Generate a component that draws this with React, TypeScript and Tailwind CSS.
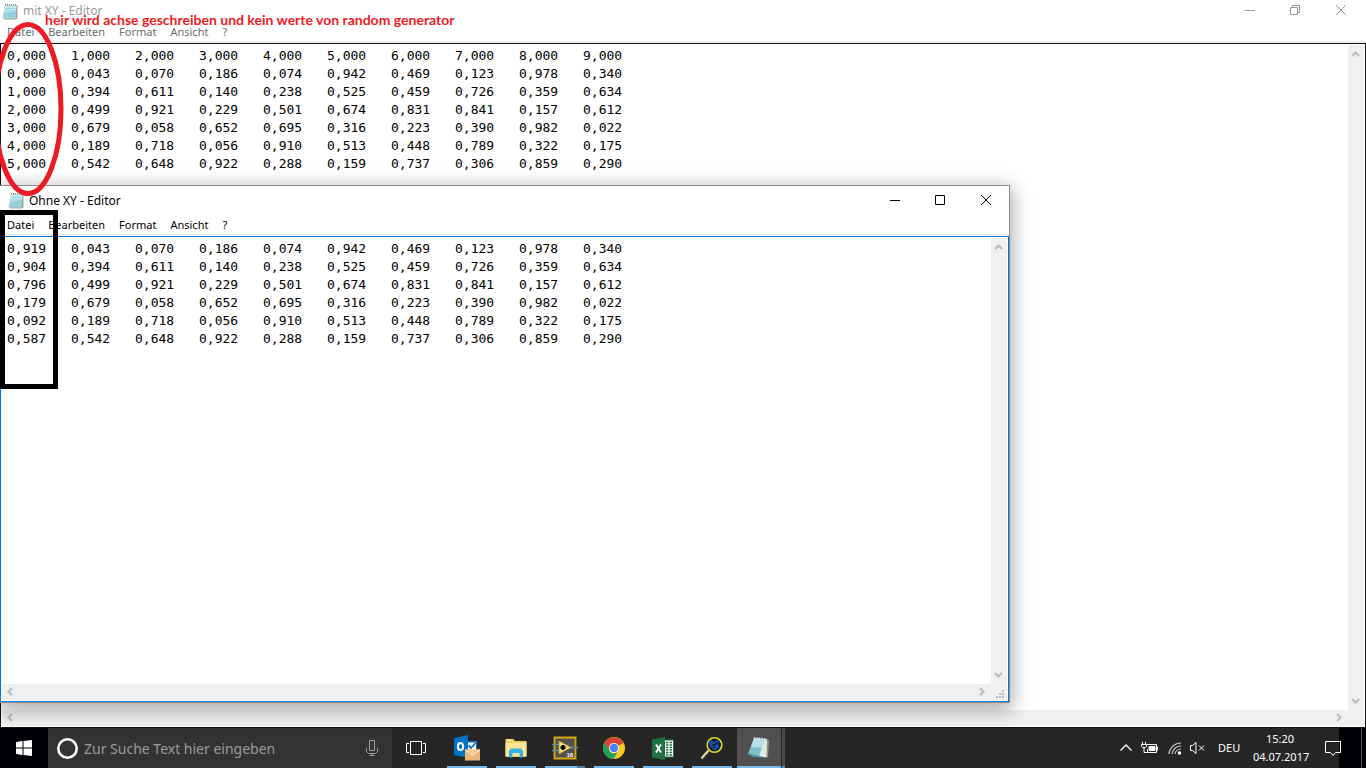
import { type FC, type ReactNode } from 'react';

const withAxis = [
  "0,000\t1,000\t2,000\t3,000\t4,000\t5,000\t6,000\t7,000\t8,000\t9,000",
  "0,000\t0,043\t0,070\t0,186\t0,074\t0,942\t0,469\t0,123\t0,978\t0,340",
  "1,000\t0,394\t0,611\t0,140\t0,238\t0,525\t0,459\t0,726\t0,359\t0,634",
  "2,000\t0,499\t0,921\t0,229\t0,501\t0,674\t0,831\t0,841\t0,157\t0,612",
  "3,000\t0,679\t0,058\t0,652\t0,695\t0,316\t0,223\t0,390\t0,982\t0,022",
  "4,000\t0,189\t0,718\t0,056\t0,910\t0,513\t0,448\t0,789\t0,322\t0,175",
  "5,000\t0,542\t0,648\t0,922\t0,288\t0,159\t0,737\t0,306\t0,859\t0,290",
].join("\n");

const withoutAxis = [
  "0,919\t0,043\t0,070\t0,186\t0,074\t0,942\t0,469\t0,123\t0,978\t0,340",
  "0,904\t0,394\t0,611\t0,140\t0,238\t0,525\t0,459\t0,726\t0,359\t0,634",
  "0,796\t0,499\t0,921\t0,229\t0,501\t0,674\t0,831\t0,841\t0,157\t0,612",
  "0,179\t0,679\t0,058\t0,652\t0,695\t0,316\t0,223\t0,390\t0,982\t0,022",
  "0,092\t0,189\t0,718\t0,056\t0,910\t0,513\t0,448\t0,789\t0,322\t0,175",
  "0,587\t0,542\t0,648\t0,922\t0,288\t0,159\t0,737\t0,306\t0,859\t0,290",
].join("\n");

const menuItems = ["Datei", "Bearbeiten", "Format", "Ansicht", "?"];

const NotepadIcon: FC = () => (
  <svg width="16" height="17" viewBox="0 0 16 17" className="shrink-0">
    <path d="M4 2h11.500v13.500L14 16.500H2z" fill="#a8a294" />
    <path d="M3 2h11.500L13.500 15.500H.5z" fill="#9ad6e2" />
    <path d="M3 2h11.500l-.4 5.500L2 10z" fill="#c3e9ef" />
    <path d="M3.500 5.500h10M3 8h10M2.500 10.500h10M2 13h10" stroke="#83c2d0" strokeWidth=".6" />
    <path d="M3.500 1v1.500M5.500 1v1.500M7.500 1v1.500M9.500 1v1.500M11.500 1v1.500M13.500 1v1.500" stroke="#66767a" strokeWidth=".9" />
  </svg>
);

const Arrow: FC<{ d: string }> = ({ d }) => (
  <svg width="16" height="16" viewBox="0 0 16 16" fill="none" stroke="#bcbcbc" strokeWidth="2.200">
    <path d={d} />
  </svg>
);

type EditorWindowProps = {
  title: string;
  text: string;
  active?: boolean;
};

const EditorWindow: FC<EditorWindowProps> = ({ title, text, active = false }) => (
  <section className="flex h-full flex-col bg-white font-['Noto_Sans','Open_Sans',sans-serif] text-xs">
    <header className={active ? "flex h-[29px] items-center pl-2" : "flex h-[22px] items-center pl-[2px]"}>
      <NotepadIcon />
      <h2 className={active ? "ml-[5px] flex-1 text-black" : "ml-[5px] flex-1 text-[#999]"}>{title}</h2>
      <div className={active ? "flex h-7 self-start text-black" : "mr-[2px] flex h-5 self-start text-[#999]"}>
        <button aria-label="Minimieren" className="flex w-11 items-center justify-center">
          <svg width="10" height="10" stroke="currentColor"><path d="M0 5.500h10" /></svg>
        </button>
        <button aria-label="Maximieren" className="flex w-[46px] items-center justify-center">
          <svg width="10" height="10" fill="none" stroke="currentColor">
            {active ? <path d="M.5.5h9v9h-9z" /> : <path d="M.5 2.500h7v7h-7zM2.500 2V.5h7v7H8" />}
          </svg>
        </button>
        <button aria-label="Schließen" className="flex w-[46px] items-center justify-center">
          <svg width="10" height="10" stroke="currentColor"><path d="M0 0l10 10M10 0L0 10" /></svg>
        </button>
      </div>
    </header>
    <nav className={active ? "flex h-[21px] items-center gap-[14px] border-b-2 border-[#f0f0f0] pt-[2px] pl-[7px] text-[11px] text-black" : "flex h-[21px] items-center gap-[14px] border-b-2 border-[#f0f0f0] pt-[2px] pl-[7px] text-[11px] text-[#6d6d6d]"}>
      {menuItems.map((item) => (
        <button key={item}>{item}</button>
      ))}
    </nav>
    <div className={active ? "flex min-h-0 flex-1 flex-col border border-[#0078d7] p-px" : "flex min-h-0 flex-1 flex-col border border-[#111] p-px"}>
      <div className="flex min-h-0 flex-1">
        <textarea
          aria-label={title}
          defaultValue={text}
          spellCheck={false}
          wrap="off"
          className="flex-1 resize-none overflow-hidden pl-[5px] pt-[2px] font-['DejaVu_Sans_Mono',monospace] text-[13px] leading-[18px] text-black outline-none [tab-size:64px]"
        />
        <div className="flex w-4 flex-col justify-between bg-[#f0f0f0]">
          <Arrow d="M4 11l3.500-3.500L11 11" />
          <Arrow d="M4 5l3.500 3.500L11 5" />
        </div>
      </div>
      <div className="flex h-4 bg-[#f0f0f0]">
        <div className="flex flex-1 justify-between">
          <Arrow d="M10 4L6.500 7.500 10 11" />
          <Arrow d="M5 4l3.500 3.500L5 11" />
        </div>
        <div className="w-4">
          {active && (
            <svg width="16" height="16" fill="#bcbcbc">
              <path d="M11 6h2v2h-2zM8 9h2v2H8zM11 9h2v2h-2zM5 12h2v2H5zM8 12h2v2H8zM11 12h2v2h-2z" />
            </svg>
          )}
        </div>
      </div>
    </div>
  </section>
);

const OutlookIcon = (
  <svg width="26" height="26" viewBox="0 0 26 26">
    <path d="M12 6h11v10H12z" fill="#0072c6" />
    <path d="M13 7.500h9v8h-9z" fill="#fff" />
    <path d="M14.500 10.500l2.500 2.500 4.500-5" fill="none" stroke="#0072c6" strokeWidth="1.800" />
    <path d="M0 3l14-3v23L0 20z" fill="#0072c6" />
    <ellipse cx="6.500" cy="11.500" rx="2.600" ry="3.500" fill="none" stroke="#fff" strokeWidth="2" />
    <path d="M11 14.500h15v11H11z" fill="#ecb678" />
    <path d="M11 14.500l7.500 6 7.500-6" fill="#f3c893" stroke="#fff3e0" strokeWidth=".9" />
  </svg>
);

const ExplorerIcon = (
  <svg width="22" height="20" viewBox="0 0 22 20">
    <path d="M.5 1h8l1.500 2h11.500v16H.5z" fill="#f2cb55" />
    <path d="M.5 4.500h21V18H.5z" fill="#fde59b" />
    <path d="M2 1.500h4.500v1H2z" fill="#fff6d4" />
    <path d="M4 19.500V13l2-2.500h10l2 2.500v6.500h-3.500V15h-7v4.500z" fill="#36b3e8" />
  </svg>
);

const LabviewIcon = (
  <svg width="26" height="24" viewBox="0 0 26 24">
    <path d="M2.500 1.500h21v21h-21z" fill="#505250" stroke="#dca70f" strokeWidth="1.800" />
    <path d="M0 8.500h7M0 14.500h7M18 11.500h8" stroke="#4c8cb5" strokeWidth="1.700" />
    <path d="M7 5l12 6.500L7 18z" fill="#f6dc7c" stroke="#c89a1a" strokeWidth=".7" />
    <path d="M11 9v5M8.500 11.500h5" stroke="#000" strokeWidth="2.600" />
    <text x="14.500" y="20.500" fill="#fff" fontSize="6" fontWeight="700" fontFamily="Liberation Sans">16</text>
  </svg>
);

const ChromeIcon = (
  <svg width="22" height="22" viewBox="0 0 22 22">
    <circle cx="11" cy="11" r="11" fill="#fbc924" />
    <path d="M11 11L1.470 5.500A11 11 0 0 1 20.530 6z" fill="#dc4437" />
    <path d="M1.470 5.500L6.200 13.700 11 6h9.500z" fill="#dc4437" />
    <path d="M1.470 5.500A11 11 0 0 0 10.500 22l4.830-8.500a5 5 0 0 1-9.100 0z" fill="#1d9e5a" />
    <circle cx="11" cy="11" r="5" fill="#fff" />
    <circle cx="11" cy="11" r="4.200" fill="#4285f4" />
  </svg>
);

const ExcelIcon = (
  <svg width="22" height="23" viewBox="0 0 22 23">
    <path d="M12 3h9.500v17H12z" fill="#fff" stroke="#1f7244" />
    <path d="M14 5.500h2.500M17.500 5.500H20M14 8h2.500M17.500 8H20M14 10.500h2.500M17.500 10.500H20M14 13h2.500M17.500 13H20M14 15.500h2.500M17.500 15.500H20M14 18h2.500M17.500 18H20" stroke="#1f7244" strokeWidth="1.300" />
    <path d="M0 2.500L13 0v23L0 20.500z" fill="#1f7244" />
    <path d="M4 7.500l5 8M9 7.500l-5 8" stroke="#fff" strokeWidth="1.900" />
  </svg>
);

const SearchToolIcon = (
  <svg width="24" height="24" viewBox="0 0 24 24">
    <path d="M1.500 22.500l7-8" stroke="#e8e0bc" strokeWidth="2.200" />
    <path d="M2.500 23l7-8" stroke="#8c7a2e" strokeWidth=".8" />
    <circle cx="14.500" cy="9" r="7.300" fill="#10182c" stroke="#e3dc21" strokeWidth="1.600" />
    <path d="M8.500 5l3-1 2 2.500L15 5l4-1-1 4 1.500 3-4 3.500-3-1-2.500-3z" fill="#174fb0" />
    <path d="M12 9l3 0 2-3M13 12l2-1" stroke="#071125" strokeWidth="1.300" fill="none" />
  </svg>
);

const NotepadLargeIcon = (
  <svg width="24" height="24" viewBox="0 0 24 24">
    <path d="M19 3l3 1.500L21 21l-2 .5z" fill="#a58a62" />
    <path d="M7 2l13 1-.5 18.500-7-1z" fill="#dcebed" />
    <path d="M7 2l11 1.500L12 20 1 18z" fill="#7fc0cd" />
    <path d="M7 2l11 1.500-3 8L4 11z" fill="#b9e0e6" />
    <path d="M1 18l11 2 7 1.500-13-.5z" fill="#489bae" />
    <path d="M7.500 1v2M10 1v2M12.500 1.500v2M15 1.500v2M17.500 2v2" stroke="#e9eff0" strokeWidth=".8" />
  </svg>
);

const apps: { name: string; icon: ReactNode; grouped?: boolean }[] = [
  { name: "Outlook", icon: OutlookIcon },
  { name: "Explorer", icon: ExplorerIcon },
  { name: "LabVIEW", icon: LabviewIcon, grouped: true },
  { name: "Chrome", icon: ChromeIcon },
  { name: "Excel", icon: ExcelIcon },
  { name: "Suche", icon: SearchToolIcon },
];

const Taskbar: FC = () => (
  <footer className="flex h-10 shrink-0 bg-[#262626] font-['Noto_Sans','Open_Sans',sans-serif] text-white">
    <button aria-label="Start" className="flex w-12 items-center justify-center bg-[#000106]">
      <svg width="16" height="16" viewBox="0 0 16 16" fill="#fff">
        <path d="M0 2l6.500-.9v6.400H0zM7.500 1L16 0v7.500H7.500zM0 8.500h6.500v6.400L0 14zM7.500 8.500H16V16l-8.500-1z" />
      </svg>
    </button>
    <label className="flex w-[344px] items-center bg-[#333] pl-2 pr-[14px]">
      <svg width="23" height="23" fill="none" stroke="#fff" strokeWidth="2.500">
        <circle cx="11.500" cy="11.500" r="9.200" />
      </svg>
      <input
        type="text"
        aria-label="Suche"
        placeholder="Zur Suche Text hier eingeben"
        className="ml-[5px] min-w-0 flex-1 bg-transparent pt-px text-sm outline-none placeholder:text-[#9b9b9b]"
      />
      <svg width="12" height="18" fill="none" stroke="#a0a0a0">
        <path d="M3.500 1.500h5v10h-5zM.5 9v3.500l2 2h7l2-2V9M6 14.500v2.500M3.500 16.500h5" />
      </svg>
    </label>
    <button aria-label="Taskansicht" className="flex w-12 items-center justify-center">
      <svg width="20" height="14" fill="none" stroke="#fff">
        <path d="M4.500.5h11v13h-11zM3 2.500H.5v9H3M17 2.500h2.500v9H17" />
      </svg>
    </button>
    <div className="ml-[7px] flex gap-[9px]">
      {apps.map((app) => (
        <button key={app.name} aria-label={app.name} className="relative flex w-10 items-center justify-center border-b-2 border-[#76b9ed] pt-[2px]">
          {app.icon}
          {app.grouped && <span className="absolute right-0 -bottom-[2px] h-[2px] w-2 bg-[#4f7ba0]" />}
        </button>
      ))}
    </div>
    <button aria-label="Editor" className="ml-[5px] flex w-11 items-center justify-center border-b-2 border-[#76b9ed] bg-[#505050] pt-[2px]">
      {NotepadLargeIcon}
    </button>
    <div className="ml-px w-[3px] border-b-2 border-[#5d8fb5] bg-[#484848]" />
    <div className="ml-auto flex items-center">
      <button aria-label="Ausgeblendete Symbole" className="mr-2">
        <svg width="14" height="16" fill="none" stroke="#fff" strokeWidth="1.300"><path d="M1.500 10.500L7 5l5.500 5.500" /></svg>
      </button>
      <button aria-label="Akku" className="mr-[10px]">
        <svg width="17" height="16" fill="none" stroke="#fff">
          <path d="M6 4.500h9.500v8h-9V9" />
          <path d="M8 6.500h6v4H8z" fill="#fff" />
          <path d="M16.500 6.500v4M1.500 2v2M4.500 2v2M.5 4.500h5v2l-1 1h-3l-1-1zM3 8v4.500h3" />
        </svg>
      </button>
      <button aria-label="WLAN" className="mr-2">
        <svg width="14" height="16" fill="none" stroke="#c8c8c8" strokeWidth="1.200">
          <path d="M1 14A12 12 0 0 1 13 3M4 14a9 9 0 0 1 9-8M7 14a6 6 0 0 1 6-5" />
          <circle cx="11.500" cy="13" r="1.200" fill="#fff" stroke="#fff" />
        </svg>
      </button>
      <button aria-label="Ton" className="mr-[13px]">
        <svg width="15" height="16" fill="none" stroke="#fff">
          <path d="M.5 5.500h2l3.500-3v11l-3.500-3h-2zM9 5.500l5 5M14 5.500l-5 5" />
        </svg>
      </button>
      <span className="w-[23px] text-[11px]">DEU</span>
      <time className="ml-3 w-[54px] text-center text-[11px] leading-[18px]">
        15:20
        <br />
        04.07.2017
      </time>
    </div>
    <button aria-label="Info-Center" className="ml-[18px] flex w-[36px] items-center bg-linear-to-r from-[#262626] from-40% to-[#000106] to-40%">
      <svg width="17" height="18" fill="none" stroke="#fff"><path d="M.5 2.500h15v11h-5l-2.500 3-2.500-3h-5z" /></svg>
    </button>
    <div className="w-[5px] border-l border-[#555] bg-[#000106]" />
  </footer>
);

const App: FC = () => {
  return (
    <main className="relative flex h-screen flex-col overflow-hidden bg-white">
      <div className="min-h-0 flex-1">
        <EditorWindow title="mit XY - Editor" text={withAxis} />
      </div>
      <div className="absolute left-0 top-[185px] h-[518px] w-[1010px] border-y border-r border-[#8d8d8d] shadow-[0_5px_18px_2px_rgba(0,0,0,0.35)]">
        <EditorWindow title="Ohne XY - Editor" text={withoutAxis} active />
      </div>
      <p className="absolute left-[45px] top-[11px] whitespace-nowrap font-['Lato',sans-serif] text-sm leading-[18px] font-bold text-[#ed1c24]">
        heir wird achse geschreiben und kein werte von random generator
      </p>
      <svg className="pointer-events-none absolute left-0 top-0" width="70" height="200" fill="none">
        <ellipse cx="28" cy="109" rx="33" ry="84.500" stroke="#ed1c24" strokeWidth="5" />
      </svg>
      <div className="pointer-events-none absolute left-0 top-[210px] h-[179px] w-[58px] border-5 border-black" />
      <Taskbar />
    </main>
  );
};

export default App;
